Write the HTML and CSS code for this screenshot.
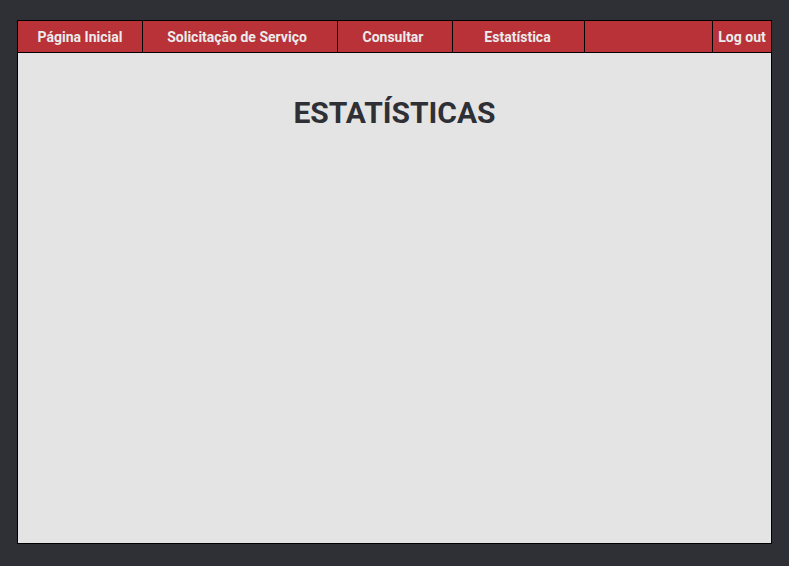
FILE: index.html
```html
<!DOCTYPE html>
<html lang="pt">
<head>
<meta charset="utf-8">
<link rel="stylesheet" href="styles.css">
</head>
<body>
<div class="frame">
  <nav class="nav">
    <a class="cell c1">Página Inicial</a>
    <a class="cell c2">Solicitação de Serviço</a>
    <a class="cell c3">Consultar</a>
    <a class="cell c4">Estatística</a>
    <a class="cell c5"></a>
    <a class="cell c6">Log out</a>
  </nav>
  <main class="content">
    <h1 class="title">ESTATÍSTICAS</h1>
  </main>
</div>
</body>
</html>
```
FILE: styles.css
```css
html, body {
  margin: 0;
  padding: 0;
  background: #2f3035;
  font-family: Roboto, "Noto Sans", sans-serif;
}
body {
  padding: 20px 17px 22px 17px;
}
.frame {
  width: 753px;
  height: 522px;
  border: 1px solid #000;
  background: #e4e4e4;
  display: flex;
  flex-direction: column;
}
.nav {
  display: flex;
  height: 31px;
  background: #b83238;
  border-bottom: 1px solid #000;
}
.cell {
  display: flex;
  align-items: center;
  justify-content: center;
  color: #ececec;
  font-weight: 700;
  font-size: 14px;
  border-right: 1px solid #000;
  box-sizing: border-box;
  white-space: nowrap;
  padding-right: 4px;
}
.c1 { width: 125px; padding-right: 0; }
.c2 { width: 195px; padding-right: 6px; }
.c3 { width: 115px; }
.c4 { width: 132px; padding-right: 2px; }
.c5 { width: 128px; }
.c6 { flex: 1; border-right: none; padding-right: 0; }
.content {
  flex: 1;
}
.title {
  margin: 42px 0 0 0;
  text-align: center;
  font-size: 30px;
  font-weight: 700;
  color: #2f3035;
  line-height: 35px;
}
```
